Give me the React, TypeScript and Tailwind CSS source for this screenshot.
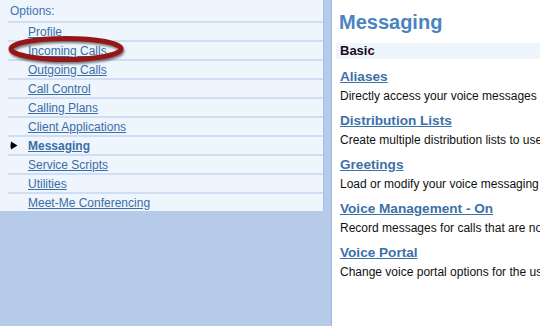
const options = [
  "Profile",
  "Incoming Calls",
  "Outgoing Calls",
  "Call Control",
  "Calling Plans",
  "Client Applications",
  "Messaging",
  "Service Scripts",
  "Utilities",
  "Meet-Me Conferencing",
];

const features = [
  { title: "Aliases", text: "Directly access your voice messages from other phone numbers" },
  { title: "Distribution Lists", text: "Create multiple distribution lists to use when sending messages" },
  { title: "Greetings", text: "Load or modify your voice messaging greetings" },
  { title: "Voice Management - On", text: "Record messages for calls that are not answered" },
  { title: "Voice Portal", text: "Change voice portal options for the user" },
];

const App = () => {
  return (
    <div
      className="flex h-[326px] w-[540px] overflow-hidden bg-white text-[12px]"
      style={{ fontFamily: '"Liberation Sans", Arial, sans-serif' }}
    >
      {/* kolom kiri: menu options */}
      <div className="relative w-[332px] shrink-0 border-r border-[#9fb5da] bg-[#b6cbe9]">
        <div className="w-[324px] border-r border-[#a9bfe2] bg-[#eef5fd]">
          <div className="flex h-[21px] items-center pl-[10px] text-[#3f73ad]">Options:</div>
          {options.map((o) => (
            <div
              key={o}
              className="ml-[8px] flex h-[19px] items-center border-t-2 border-[#cfdef2] pl-[20px]"
            >
              {o === "Messaging" ? (
                <>
                  <svg className="absolute left-[10px]" width="8" height="9" viewBox="0 0 8 9">
                    <path d="M1 0.5 L7.5 4.5 L1 8.5 Q0 4.5 1 0.5 Z" fill="#000" />
                  </svg>
                  <a href="#" className="font-bold text-[#3a6ea5] underline">
                    {o}
                  </a>
                </>
              ) : (
                <a href="#" className="text-[#3a6ea5] underline">
                  {o}
                </a>
              )}
            </div>
          ))}
        </div>
        {/* lingkaran merah penanda */}
        <svg className="absolute left-[5px] top-[34px]" width="126" height="32" viewBox="0 0 126 32">
          <defs>
            <filter id="sh" x="-10%" y="-30%" width="120%" height="170%">
              <feDropShadow dx="1" dy="2" stdDeviation="1.3" floodColor="#000" floodOpacity="0.5" />
            </filter>
          </defs>
          <ellipse
            cx="61"
            cy="15"
            rx="55"
            ry="10.5"
            fill="none"
            stroke="#951717"
            strokeWidth="5"
            filter="url(#sh)"
          />
        </svg>
      </div>

      {/* kolom kanan: konten */}
      <div className="min-w-0 flex-1 bg-white pl-[4px]">
        <h1 className="whitespace-nowrap pl-[3px] pt-[9px] text-[20px] font-bold leading-[26px] text-[#4a84bf]">
          Messaging
        </h1>
        <div className="mt-[8px] flex h-[16px] items-center bg-[#eef5fd] pl-[4px] text-[13px] font-bold text-[#1a0a1a]">
          Basic
        </div>
        <div className="pl-[4px] pt-[8px]">
          {features.map((f) => (
            <div key={f.title} className="h-[44px] whitespace-nowrap">
              <a href="#" className="block h-[20px] text-[13.6px] font-bold leading-[20px] text-[#3c70a8] underline">
                {f.title}
              </a>
              <div className="h-[18px] leading-[18px] text-[#111]">{f.text}</div>
            </div>
          ))}
        </div>
      </div>
    </div>
  );
};

export default App;
